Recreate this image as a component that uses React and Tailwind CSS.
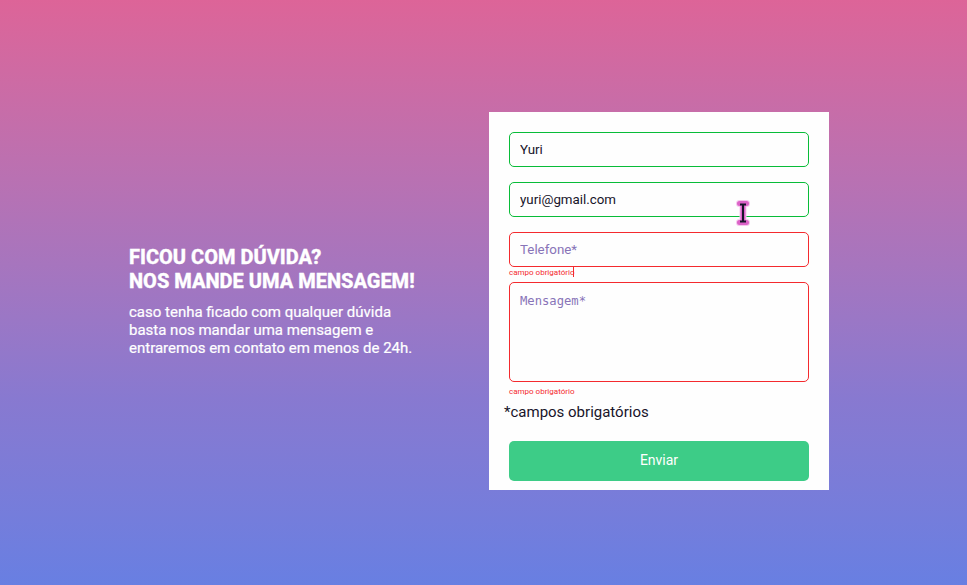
export default function App() {
  return (
    <main className="relative flex h-[585px] w-full bg-linear-to-b from-[#dd6498] via-[#8879d0] via-68% to-[#687fe2] pl-[129px] font-['Roboto',sans-serif]">
      <section className="mt-[245px] w-[360px] shrink-0 text-white">
        <h1 className="text-[20px] leading-6 font-extrabold [-webkit-text-stroke:0.3px_white]">FICOU COM DÚVIDA?<br />NOS MANDE UMA MENSAGEM!</h1>
        <p className="mt-[10px] text-[15px] leading-[18px] [-webkit-text-stroke:0.2px_white]">caso tenha ficado com qualquer dúvida<br />basta nos mandar uma mensagem e<br />entraremos em contato em menos de 24h.</p>
      </section>
      <form className="mt-28 h-[378px] w-[340px] shrink-0 bg-[#fefefe] px-5 pt-5 text-[#18142a]">
        <input defaultValue="Yuri" className="block h-[35px] w-full rounded-[5px] border border-[#08bc38] px-[10px] pb-px text-[13.333px]" />
        <input defaultValue="yuri@gmail.com" className="mt-[15px] block h-[35px] w-full rounded-[5px] border border-[#08bc38] px-[10px] pb-px text-[13.333px]" />
        <input placeholder="Telefone*" className="mt-[15px] block h-[35px] w-full rounded-[5px] border border-[#f42a2e] px-[10px] pb-px text-[13.333px] placeholder:text-[#8874b8]" />
        <p className="flex h-[15px] text-[8px] leading-[11px] text-[#f42a2e]">campo obrigatório<span className="-ml-px h-[10px] w-px bg-[#f42a2e]" /></p>
        <textarea placeholder="Mensagem*" className="block h-[100px] w-full resize-none rounded-[5px] border border-[#f42a2e] px-[10px] py-[9px] font-['DejaVu_Sans_Mono',monospace] text-[12.2px] placeholder:text-[#8874b8]" />
        <p className="mt-1 h-[11px] text-[8px] leading-[11px] text-[#f42a2e]">campo obrigatório</p>
        <p className="-ml-[5px] mt-[6px] h-[38px] text-[15px] leading-[18px]">*campos obrigatórios</p>
        <button className="h-10 w-full rounded-[5px] bg-[#3dcc87] pb-px text-[14px] text-white">Enviar</button>
      </form>
      <svg className="pointer-events-none absolute left-[734px] top-[198px]" width="18" height="30" viewBox="0 0 18 30" fill="none" strokeLinecap="round" strokeLinejoin="round">
        <path d="M5.5 5.5h7M9 5.5v19M5.5 24.5h7" stroke="#f5c8ed" strokeWidth="7" />
        <path d="M5.5 5.5h7M9 5.5v19M5.5 24.5h7" stroke="#dc62c8" strokeWidth="5" />
        <path d="M6 6.5h6M9 6.5v17M6 23.5h6" stroke="#18142a" strokeWidth="2" strokeLinecap="butt" />
      </svg>
    </main>
  );
}
